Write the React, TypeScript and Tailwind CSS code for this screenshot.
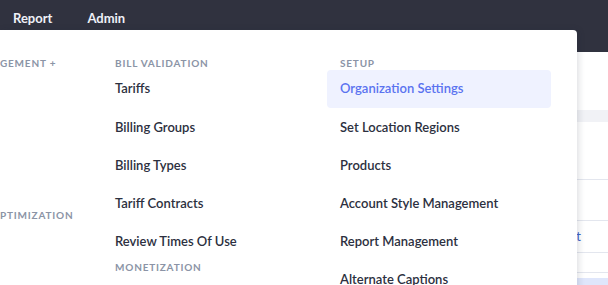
import React from "react";

const Header = ({ children }: { children: React.ReactNode }) => (
  <div className="h-[14px] shrink-0 flex items-center px-[13px] text-[10px] font-bold tracking-[0.08em] text-[#8b94a6] whitespace-nowrap">
    {children}
  </div>
);

const Item = ({ children, active }: { children: React.ReactNode; active?: boolean }) => (
  <div
    className={
      "h-[38.2px] shrink-0 flex items-center px-[13px] rounded-[4px] text-[13px] font-semibold whitespace-nowrap " +
      (active ? "bg-[#eff2ff] text-[#5a73f0]" : "text-[#2c3040]")
    }
  >
    {children}
  </div>
);

export default function App() {
  return (
    <div
      className="relative w-[608px] h-[285px] overflow-hidden bg-white"
      style={{ fontFamily: "Lato, 'Noto Sans', sans-serif" }}
    >
      {/* Navbar */}
      <div className="h-[52px] bg-[#30323f] flex items-start">
        <div className="h-[38px] flex items-center gap-[35px] pl-[13px] text-[13px] font-bold text-[#eef0f7]">
          <span>Report</span>
          <span>Admin</span>
        </div>
      </div>

      {/* Page content behind the dropdown */}
      <div className="flex flex-col">
        <div className="h-[58px]" />
        <div className="h-[12px] bg-[#f1f2f6]" />
        <div className="h-[58px] border-b border-[#e3e6ee]" />
        <div className="h-[41px] border-b border-[#e3e6ee]" />
        <div className="h-[32px] border-b border-[#e3e6ee] flex items-center justify-end pr-[27px] text-[13px] text-[#3d63c9]">
          Edit
        </div>
        <div className="h-[20px] border-b border-[#e3e6ee]" />
        <div className="h-[5px]" />
        <div className="h-[20px] bg-[#dfe6fb]" />
      </div>

      {/* Dropdown panel */}
      <div className="absolute left-0 top-[30px] w-[577px] h-[290px] bg-white rounded-tr-[4px] shadow-[2px_0_6px_rgba(30,35,60,0.14)] flex items-start pt-[26px]">
        <div className="w-[102px] shrink-0 flex flex-col overflow-hidden">
          <div className="h-[14px] flex items-center text-[10px] font-bold tracking-[0.08em] text-[#8b94a6] whitespace-nowrap">
            GEMENT +
          </div>
          <div className="h-[138px]" />
          <div className="h-[14px] flex items-center text-[10px] font-bold tracking-[0.08em] text-[#8b94a6] whitespace-nowrap">
            PTIMIZATION
          </div>
        </div>
        <div className="w-[225px] shrink-0 flex flex-col pr-[1px]">
          <Header>BILL VALIDATION</Header>
          <Item>Tariffs</Item>
          <Item>Billing Groups</Item>
          <Item>Billing Types</Item>
          <Item>Tariff Contracts</Item>
          <Item>Review Times Of Use</Item>
          <Header>MONETIZATION</Header>
        </div>
        <div className="w-[224px] shrink-0 flex flex-col">
          <Header>SETUP</Header>
          <Item active>Organization Settings</Item>
          <Item>Set Location Regions</Item>
          <Item>Products</Item>
          <Item>Account Style Management</Item>
          <Item>Report Management</Item>
          <Item>Alternate Captions</Item>
        </div>
      </div>
    </div>
  );
}
